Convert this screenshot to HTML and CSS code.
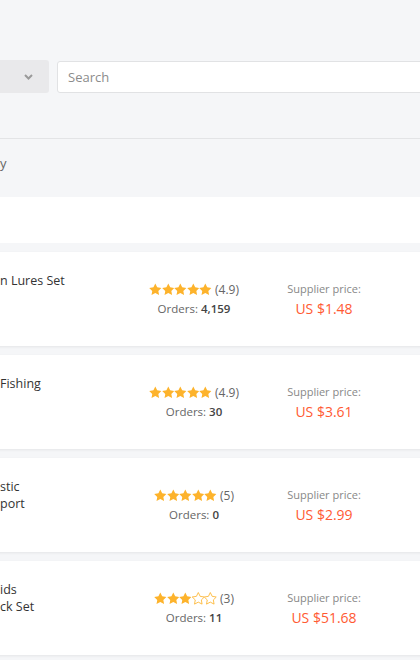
FILE: index.html
```html
<!DOCTYPE html>
<html lang="en">
  <head>
    <meta charset="UTF-8" />
    <title>Products</title>
    <link rel="stylesheet" href="styles.css">
  </head>
  <body>
    <svg width="0" height="0" style="position: absolute">
      <defs>
        <symbol id="star" viewBox="0 0 24 24">
          <path d="M12 0.6l3.6 7.3 8 1.2-5.8 5.6 1.4 8L12 18.9l-7.2 3.8 1.4-8L0.4 9.1l8-1.2z" />
        </symbol>
      </defs>
    </svg>
    <div class="page">
      <div class="toolbar">
        <div class="category">
          <svg class="chevron" width="9" height="6" viewBox="0 0 9 6">
            <path d="M1 1l3.5 3.5L8 1" />
          </svg>
        </div>
        <input class="search" type="text" placeholder="Search" />
      </div>

      <div class="sortbar"><span class="sort-label">y</span></div>
      <div class="band"></div>

      <div class="list">
        <div class="card">
          <div class="title">n Lures Set</div>
          <div class="rating">
            <div class="stars">
              <svg class="star"><use href="#star" /></svg>
              <svg class="star"><use href="#star" /></svg>
              <svg class="star"><use href="#star" /></svg>
              <svg class="star"><use href="#star" /></svg>
              <svg class="star"><use href="#star" /></svg>
              <span class="score">(4.9)</span>
            </div>
            <div class="orders">Orders: <b>4,159</b></div>
          </div>
          <div class="price">
            <div class="price-label">Supplier price:</div>
            <div class="price-value">US $1.48</div>
          </div>
        </div>

        <div class="card">
          <div class="title">Fishing</div>
          <div class="rating">
            <div class="stars">
              <svg class="star"><use href="#star" /></svg>
              <svg class="star"><use href="#star" /></svg>
              <svg class="star"><use href="#star" /></svg>
              <svg class="star"><use href="#star" /></svg>
              <svg class="star"><use href="#star" /></svg>
              <span class="score">(4.9)</span>
            </div>
            <div class="orders">Orders: <b>30</b></div>
          </div>
          <div class="price">
            <div class="price-label">Supplier price:</div>
            <div class="price-value">US $3.61</div>
          </div>
        </div>

        <div class="card">
          <div class="title">stic<br />port</div>
          <div class="rating">
            <div class="stars">
              <svg class="star"><use href="#star" /></svg>
              <svg class="star"><use href="#star" /></svg>
              <svg class="star"><use href="#star" /></svg>
              <svg class="star"><use href="#star" /></svg>
              <svg class="star"><use href="#star" /></svg>
              <span class="score">(5)</span>
            </div>
            <div class="orders">Orders: <b>0</b></div>
          </div>
          <div class="price">
            <div class="price-label">Supplier price:</div>
            <div class="price-value">US $2.99</div>
          </div>
        </div>

        <div class="card">
          <div class="title">ids<br />ck Set</div>
          <div class="rating">
            <div class="stars">
              <svg class="star"><use href="#star" /></svg>
              <svg class="star"><use href="#star" /></svg>
              <svg class="star"><use href="#star" /></svg>
              <svg class="star empty"><use href="#star" /></svg>
              <svg class="star empty"><use href="#star" /></svg>
              <span class="score">(3)</span>
            </div>
            <div class="orders">Orders: <b>11</b></div>
          </div>
          <div class="price">
            <div class="price-label">Supplier price:</div>
            <div class="price-value">US $51.68</div>
          </div>
        </div>
      </div>
    </div>
  </body>
</html>
```

FILE: styles.css
```css
body {
  font-family: "Open Sans", "Noto Sans", sans-serif;
  background-color: #f5f6f8;
  margin: 0;
  overflow: hidden;
  color: #333;
}
/* the page runs past both edges of the window */
.page {
  margin: 0 -12px;
}
.toolbar {
  display: flex;
  gap: 8px;
  padding-top: 60px;
}
.category {
  width: 61px;
  height: 33px;
  box-sizing: border-box;
  padding-right: 16px;
  background-color: #e9e9eb;
  border-radius: 3px;
  display: flex;
  align-items: center;
  justify-content: flex-end;
}
.chevron path {
  fill: none;
  stroke: #9a9a9a;
  stroke-width: 2;
}
.search {
  flex: 1;
  height: 32px;
  margin-top: 1px;
  box-sizing: border-box;
  padding: 0 10px;
  border: 1px solid #e1e2e4;
  border-radius: 3px;
  background: white;
  font-family: inherit;
  font-size: 13px;
  color: #333;
  outline: none;
}
.search::placeholder {
  color: #8c8c8c;
}
.sortbar {
  margin-top: 45px;
  height: 59px;
  border-top: 1px solid #e3e4e6;
  padding: 15px 0 0 12px;
  box-sizing: border-box;
  font-size: 13px;
  color: #666;
}
.band {
  height: 46px;
  background: white;
}
.list {
  padding-top: 9px;
}
.card {
  display: flex;
  height: 94px;
  margin-bottom: 9px;
  background: white;
  border-radius: 2px;
  box-shadow: 0 1px 3px rgba(0, 0, 0, 0.07);
}
.title {
  width: 129px;
  padding: 20px 0 0 12px;
  font-size: 12.5px;
  line-height: 17px;
  color: #333;
}
.rating,
.price {
  width: 130px;
  display: flex;
  flex-direction: column;
  justify-content: center;
  align-items: center;
}
.stars {
  display: flex;
  align-items: center;
  height: 20px;
}
.star {
  width: 12.6px;
  height: 13px;
  fill: #fdb32c;
}
.star.empty {
  fill: none;
  stroke: #fdb32c;
  stroke-width: 1.6;
}
.score {
  margin-left: 3px;
  font-size: 12px;
  color: #666;
}
.orders {
  height: 20px;
  line-height: 20px;
  font-size: 11.5px;
  color: #666;
}
.orders b {
  font-weight: 600;
  color: #444;
}
.price-label {
  height: 20px;
  line-height: 20px;
  font-size: 11px;
  color: #888;
}
.price-value {
  height: 20px;
  line-height: 20px;
  font-size: 14px;
  color: #ff5a33;
}
```
